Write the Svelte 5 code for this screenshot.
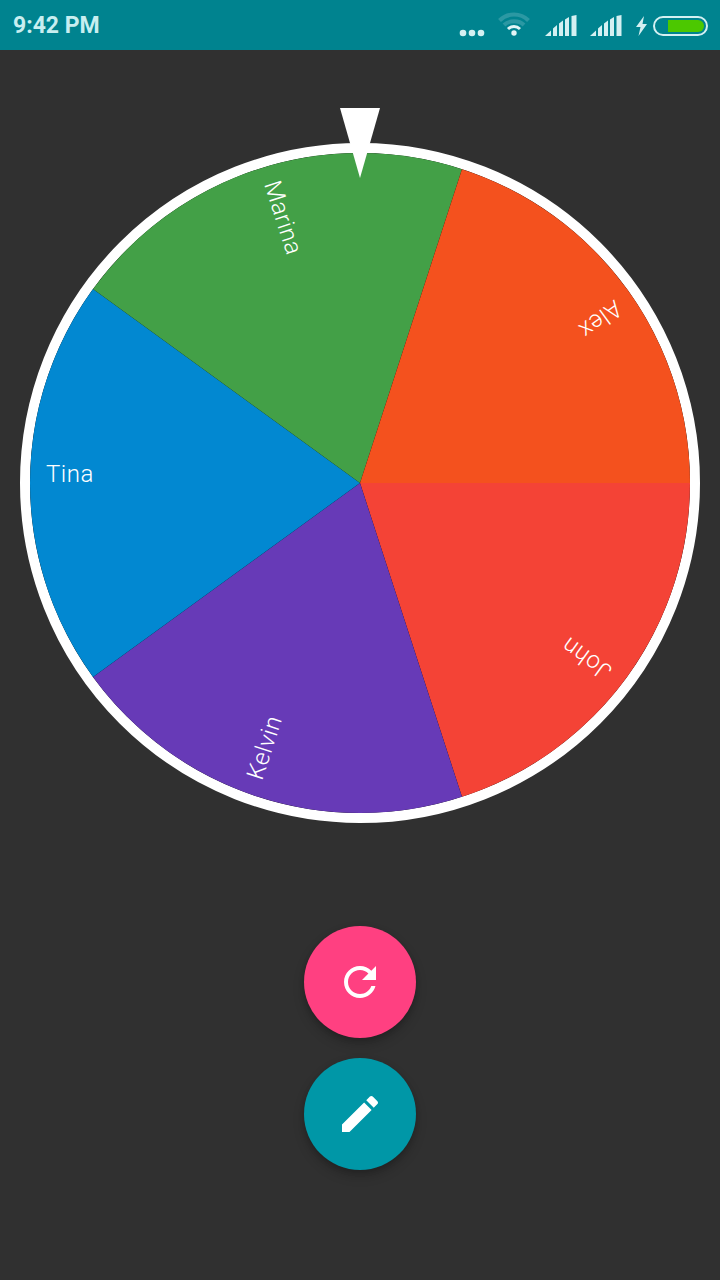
<script>
  const cx = 360, cy = 483, r = 330;
  const names = [
    { name: 'John', color: '#f44336', start: 0, rot: 216 },
    { name: 'Kelvin', color: '#673ab7', start: 72, rot: 288 },
    { name: 'Tina', color: '#0288d1', start: 144, rot: 0 },
    { name: 'Marina', color: '#43a047', start: 216, rot: 72 },
    { name: 'Alex', color: '#f4511e', start: 288, rot: 144 }
  ];
  function pt(a) {
    const t = (a * Math.PI) / 180;
    return `${cx + r * Math.cos(t)} ${cy + r * Math.sin(t)}`;
  }
  function slice(a) {
    return `M${cx} ${cy}L${pt(a)}A${r} ${r} 0 0 1 ${pt(a + 72)}Z`;
  }
</script>

<div class="page">
  <header class="status">
    <span class="time">9:42 PM</span>
    <div class="icons">
      <svg class="dots" width="26" height="8" viewBox="0 0 26 8" aria-hidden="true">
        <circle cx="4" cy="4" r="3.3" />
        <circle cx="13" cy="4" r="3.3" />
        <circle cx="22" cy="4" r="3.3" />
      </svg>
      <svg class="wifi" width="34" height="24" viewBox="0 0 34 24" aria-hidden="true">
        <path class="dim" d="M2.5 8.5C10.5 0.5 23.5 0.5 31.5 8.5" />
        <path class="dim" d="M7 13C12 8 22 8 27 13" />
        <path class="lit" d="M11 17C14.5 13.8 19.5 13.8 23 17" />
        <circle class="dot" cx="17" cy="21" r="2.7" />
      </svg>
      {#each [0, 1] as s (s)}
        <svg class="signal" width="32" height="21" viewBox="0 0 32 21" aria-hidden="true">
          <path d="M0 21L6 15.5V21Z" />
          <path d="M8 13.5L12 10V21H8Z" />
          <path d="M14 8.5L18 5.5V21H14Z" />
          <path d="M20 4.5L24 2V21H20Z" />
          <path d="M26.5 1L31.5 0V21H26.5Z" />
        </svg>
      {/each}
      <svg class="bolt" width="13" height="20" viewBox="0 0 12 20" aria-hidden="true">
        <path d="M8.5 0L0.5 11H5L3 20L11.5 8H7Z" />
      </svg>
      <svg class="battery" width="55" height="20" viewBox="0 0 55 20" aria-hidden="true">
        <rect class="shell" x="1" y="1" width="53" height="18" rx="9" />
        <path class="charge" d="M15 4H45A6 6 0 0 1 45 16H15Z" />
      </svg>
    </div>
  </header>

  <main class="stage">
    <svg class="wheel" width="720" height="730" viewBox="0 100 720 730">
      <circle class="under" cx={cx} cy={cy} r="330.3" />
      <circle class="rim" cx={cx} cy={cy} r="335" />
      {#each names as n (n.name)}
        <path class="slice" d={slice(n.start)} fill={n.color} />
      {/each}
      {#each names as n (n.name)}
        <text class="label" x="46" y="482" transform={`rotate(${n.rot} ${cx} ${cy})`}>{n.name}</text>
      {/each}
      <polygon class="pointer" points="340,108 380,108 360,178" />
    </svg>

    <div class="actions">
      <button class="fab pink" aria-label="Spin again">
        <svg width="48" height="48" viewBox="0 0 24 24" aria-hidden="true">
          <path d="M17.65 6.35C16.2 4.9 14.21 4 12 4c-4.42 0-7.99 3.58-7.99 8s3.57 8 7.99 8c3.73 0 6.84-2.55 7.73-6h-2.08c-.82 2.33-3.04 4-5.65 4-3.31 0-6-2.69-6-6s2.69-6 6-6c1.66 0 3.14.69 4.22 1.78L13 11h7V4l-2.35 2.35z" />
        </svg>
      </button>
      <button class="fab teal" aria-label="Edit">
        <svg width="48" height="48" viewBox="0 0 24 24" aria-hidden="true">
          <path d="M3 17.25V21h3.75L17.81 9.94l-3.75-3.75L3 17.25zM20.71 7.04c.39-.39.39-1.02 0-1.41l-2.34-2.34c-.39-.39-1.02-.39-1.41 0l-1.83 1.83 3.75 3.75 1.83-1.83z" />
        </svg>
      </button>
    </div>
  </main>
</div>

<style>
  :global(body) {
    background: #303030;
  }
  .page {
    width: 720px;
    min-height: 1280px;
    background: #303030;
    font-family: Roboto, "Liberation Sans", sans-serif;
  }
  .status {
    height: 50px;
    display: flex;
    align-items: center;
    justify-content: space-between;
    padding: 0 12px 0 13px;
    background: #00838f;
    box-sizing: border-box;
  }
  .time {
    font-size: 23px;
    font-weight: 700;
    color: #c8eef0;
  }
  .icons {
    display: flex;
    align-items: flex-end;
    height: 22px;
  }
  .dots {
    fill: #d4f0f2;
    margin-right: 12.5px;
    margin-bottom: -1px;
  }
  .wifi {
    margin-right: 14px;
  }
  .dim, .lit {
    fill: none;
    stroke-width: 4;
  }
  .dim { stroke: #2b98a3; }
  .lit { stroke: #e2f5f6; stroke-width: 3; }
  .dot { fill: #e2f5f6; }
  .signal {
    fill: #d4f0f2;
    margin-right: 13px;
  }
  .bolt {
    fill: #d4f0f2;
    margin-right: 5px;
  }
  .shell {
    fill: none;
    stroke: #d4f0f2;
    stroke-width: 2;
  }
  .charge { fill: #4cc800; }
  .wheel {
    display: block;
    margin-top: 50px;
  }
  .rim {
    fill: none;
    stroke: #fff;
    stroke-width: 10;
  }
  .under { fill: #000; }
  .label {
    fill: #fff;
    font-size: 24px;
    font-family: Roboto, "Liberation Sans", sans-serif;
    font-weight: 300;
    letter-spacing: 0.5px;
  }
  .pointer { fill: #fff; }
  .actions {
    display: flex;
    flex-direction: column;
    align-items: center;
    gap: 20px;
    margin-top: 96px;
  }
  .fab {
    width: 112px;
    height: 112px;
    border: none;
    border-radius: 50%;
    padding: 0;
    display: flex;
    align-items: center;
    justify-content: center;
    box-shadow: 0 6px 12px rgba(0, 0, 0, 0.2), 0 2px 5px rgba(0, 0, 0, 0.14);
  }
  .fab svg { fill: #fff; display: block; }
  .pink { background: #ff4081; }
  .teal { background: #0097a7; }
</style>
